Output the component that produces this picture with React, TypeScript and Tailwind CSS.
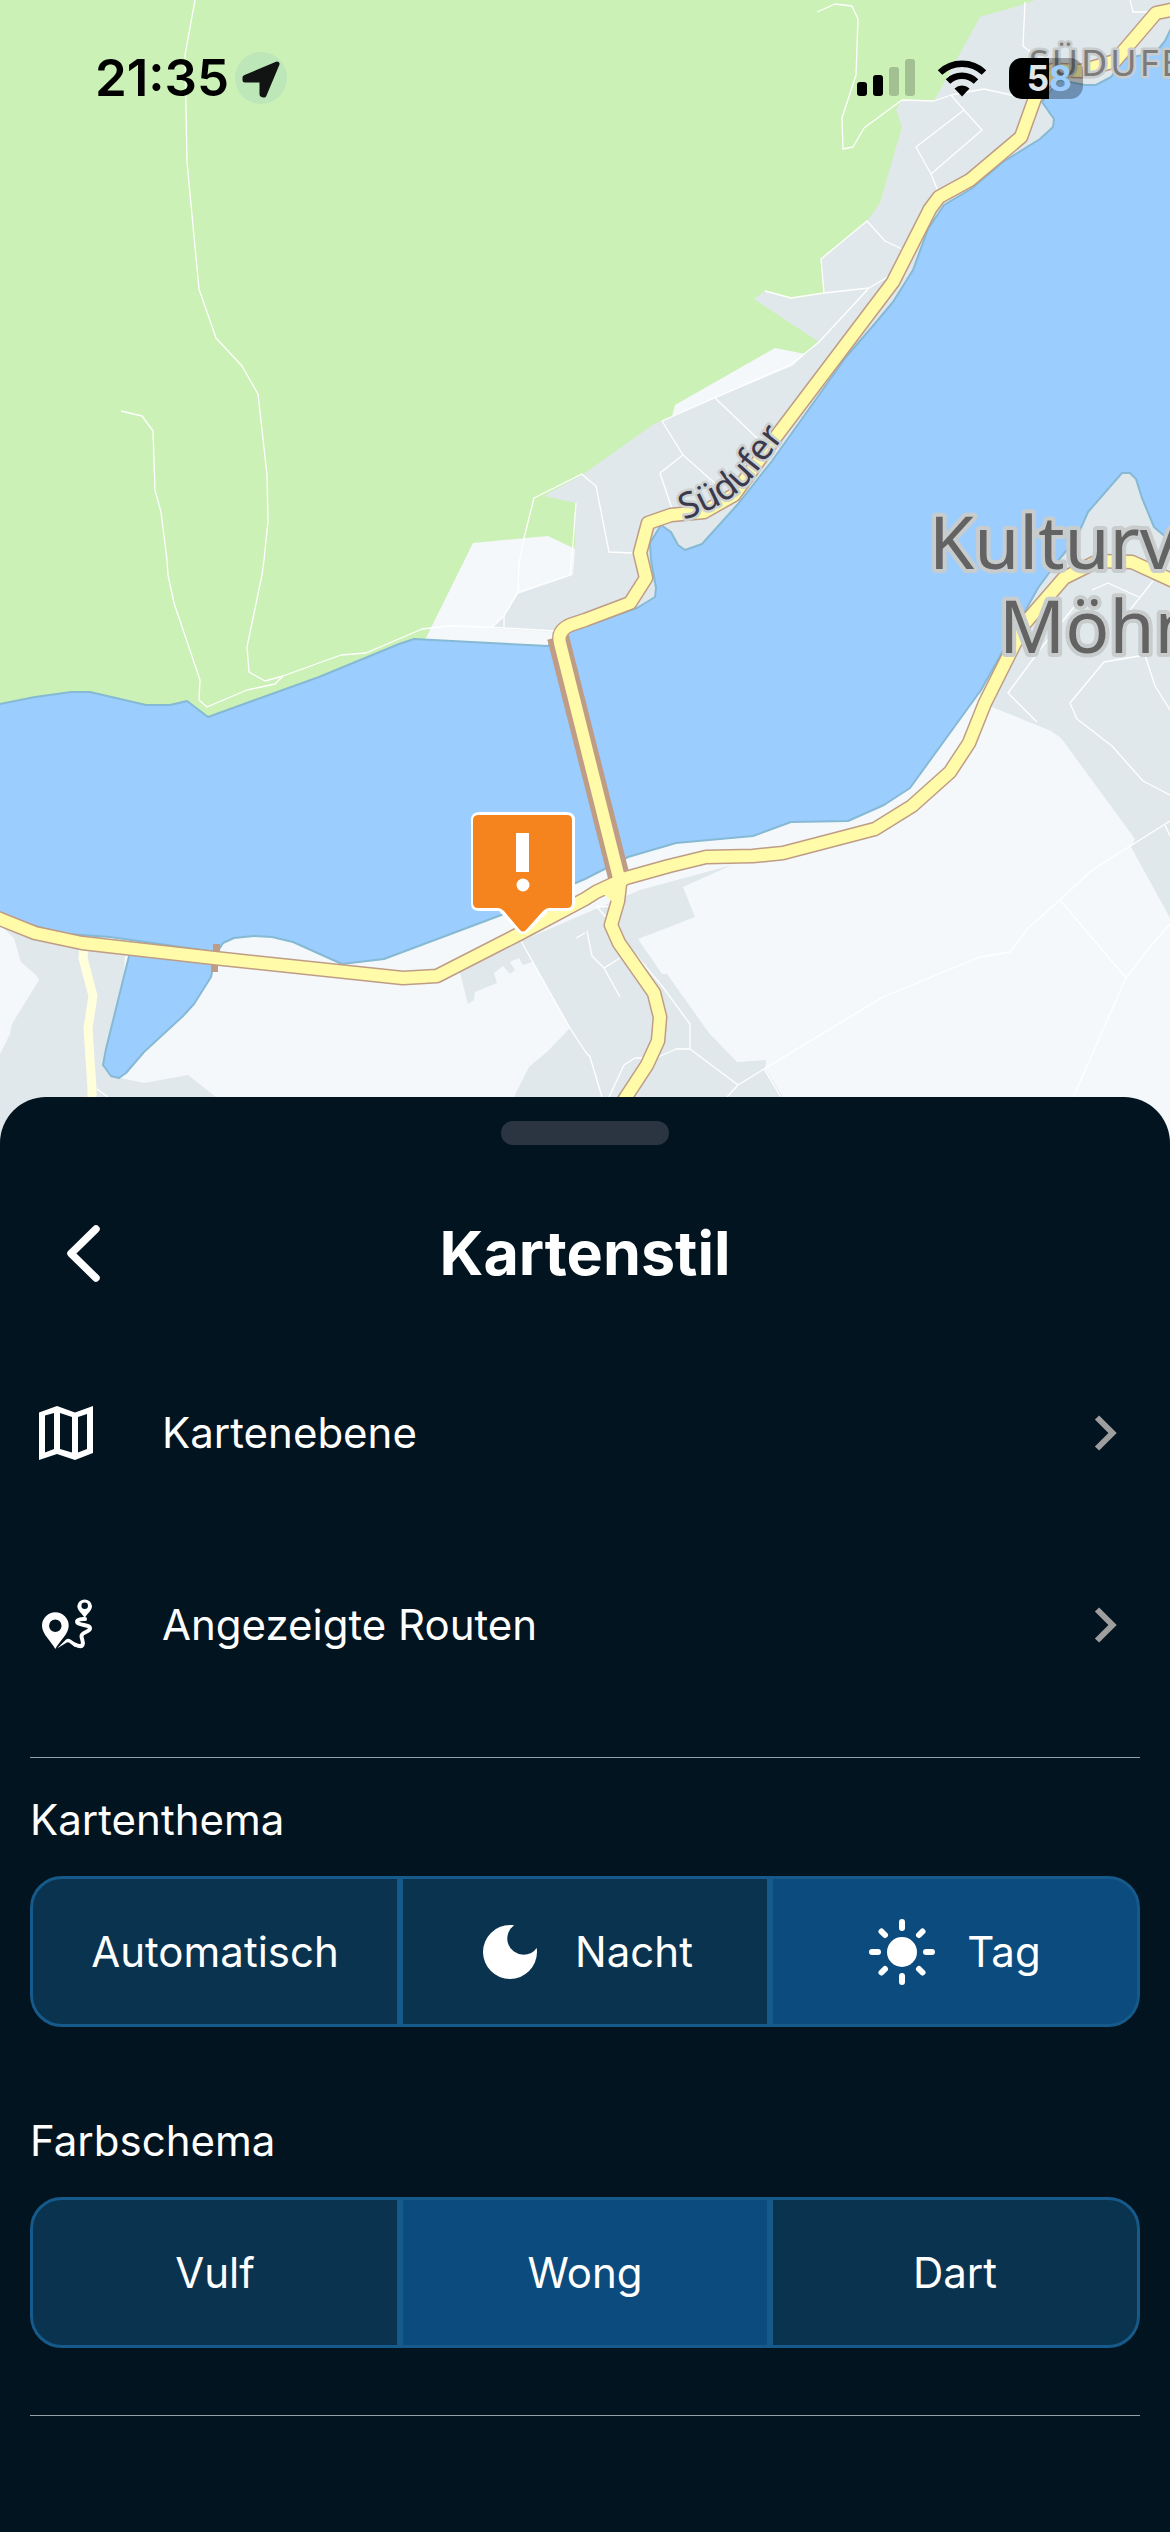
import { useState, type ReactNode } from "react";

const BUILT_UP = "#e0e8eb";
const OPEN_LAND = "#f4f8fb";
const FOREST = "#ccf1b7";
const WATER = "#9ccdff";
const SHORE = "#86b9d3";
const CASING = "#bf9c86";
const ROAD = "#fffba8";

const mainRoads = [
  "M-10 915 L0 919 L35 933 L82 943 L214 958 L403 978 L437 976 L521 933 L585 899 L596 892 L626 878 L669 866 L706 857 L753 856 L783 853 L875 829 L912 806 L950 772 L969 743 L985 703 L1025 623 L1064 578 L1098 561 L1132 562 L1180 584",
  "M621 886 L560 643 Q557 631 570 625 L585 620 L630 603 L646 578 L640 553 L648 523 L671 515 L704 512 L734 495 L775 438 L893 282 L930 209 L939 197 L970 180 L1021 137 L1035 98 L1053 70 L1081 71 L1115 61 L1156 13 L1180 8",
  "M620 884 L618 901 L611 925 L619 943 L654 993 L660 1017 L658 1041 L647 1065 L626 1097 L600 1140",
];

const paths = [
  "M195 0 L185 55 L187 162 L199 289 L216 338 L242 366 L258 394 L267 475 L268 521 L264 560 L262 575 L247 647 L249 672 L265 681 L283 676 L341 655 L366 653 L422 629 L448 626 L489 627 L554 631",
  "M121 411 L142 416 L153 431 L155 490 L161 512 L167 560 L168 575 L174 603 L200 680 L199 700 L207 707 L247 690 L275 684 L283 676",
  "M585 477 L582 474 L534 498 L524 538 L519 564 L518 592 L504 616 L491 628",
  "M518 592 L570 575 L573 544 L576 503",
  "M504 616 L504 629",
  "M585 477 L596 486 L609 552 L634 553",
  "M817 12 L835 4 L852 6 L858 19 L856 75 L842 118 L843 149 L853 147 L864 128 L902 100 L934 101 L951 95 L984 89 L1025 98",
  "M951 95 L964 110 L982 130 L931 174",
  "M964 110 L916 147 L931 174 L938 191",
  "M1025 2 L1023 46 L1033 54",
  "M1130 0 L1133 12 L1152 12",
  "M824 293 L821 259 L867 221 L885 241 L902 249",
  "M765 291 L791 298 L824 293 L869 288 L891 275",
  "M869 288 L819 342 L792 364 L662 421 L683 455 L660 473 L672 509",
  "M683 455 L718 486",
  "M714 397 L758 439",
  "M1153 581 L1130 610",
  "M1092 590 L1108 583 L1139 597",
  "M1074 607 L1042 647 L1008 693 L1037 722",
  "M1170 710 L1155 686 L1145 655 L1104 662 L1070 703 L1077 719 L1112 746 L1143 781 L1170 795",
  "M1145 655 L1151 641 L1144 635",
  "M1170 821 L1092 870 L1060 900 L1028 928 L1010 952 L980 957 L883 997 L764 1069 L738 1085 L727 1097",
  "M1060 900 L1126 978 L1150 947 L1170 924",
  "M1126 978 L1072 1100",
  "M764 1069 L781 1097",
  "M738 1085 L690 1049 L690 1024 L662 986 L624 941",
  "M690 1049 L676 1049 L656 1058 L635 1058 L624 1065 L609 1097",
  "M585 1051 L590 1057 L602 1097",
  "M611 906 L597 907 L606 917",
  "M587 931 L592 956 L604 968 L620 958",
  "M604 968 L620 997",
  "M521 941 L570 1028 L585 1051",
  "M576 938 L585 933",
  "M97 1089 L108 1097",
  "M1165 825 L1170 836",
];

function MapCanvas() {
  return (
    <svg
      className="block h-full w-full"
      viewBox="0 0 1170 1143"
      preserveAspectRatio="xMidYMin slice"
      role="img"
      aria-label="Karte"
    >
      <rect width="1170" height="1143" fill={BUILT_UP} />
      <path
        fill={FOREST}
        d="M0 0H1035L1025 4L980 17L934 101L902 100L896 110L902 127L880 203L867 221L821 259L824 294L791 299L765 291L754 299L819 342L805 355L672 416L654 424L585 473L582 475L544 496L576 503L575 548L548 540L473 545L425 650L208 730L0 715Z"
      />
      <g fill={OPEN_LAND}>
        <path d="M775 348L805 354L792 366L672 416L675 405Z" />
        <path d="M425 640L473 543L548 536L575 549L573 575L518 594L504 616L491 628L552 632L552 660H415Z" />
        <path d="M0 925L14 938L21 962L36 975L39 980L12 1024L10 1034L0 1054Z" />
        <path d="M992 707L975 690L560 800L200 925L90 930L125 950L121 1078L144 1083L188 1075L216 1097V1143H514V1097L529 1067L548 1051L570 1028L521 941L640 890L732 865L683 887L695 917L638 939L662 974L667 974L709 1033L737 1062L766 1060L765 1069L783 1097V1143H1170V918L1131 847L1135 839L1061 738L1051 731Z" />
      </g>
      <path
        fill={BUILT_UP}
        d="M437 976L460 973L468 1004L474 1000L475 992L497 983L494 973L503 966L510 974L515 970L510 962L519 958L523 965L532 962L521 936L470 958Z"
      />
      <g fill={WATER} stroke={SHORE} strokeWidth="2" strokeLinejoin="round">
        <path d="M-5 705L35 697L71 692H90L146 705H170L187 701L208 717L280 691L319 677L399 644L414 639L548 646L560 635L637 608L655 597L656 588L651 560L650 543L661 525L671 532L678 545L685 550L702 544L738 504L772 461L846 357L872 327L893 302L913 270L928 229L944 205L971 189L1003 162L1040 139L1053 127L1054 119L1042 102L1059 80L1085 85H1096L1111 77L1124 59L1156 52L1165 41L1175 20V545L1154 527L1142 498L1136 479L1130 473H1122L1088 512L1076 539L1057 562L1038 588L999 658L981 690L910 788L884 805L848 821L791 822L753 836L676 843L628 857L585 879L504 914L384 959L342 964L293 942L272 937L254 936L234 938L223 943L218 951L209 951L110 937L67 934L-5 916Z" />
        <path d="M130 952L214 962L211 977L194 1004L183 1016L144 1052L126 1073L119 1078L111 1076L103 1065L106 1049Z" />
      </g>
      <g fill="none" stroke="#ffffff" strokeWidth="1.3" strokeLinejoin="round">
        {paths.map((d) => (
          <path key={d} d={d} />
        ))}
      </g>
      <path d="M84 946L83 958L93 996L88 1028L92 1088V1143" fill="none" stroke="#ffffdc" strokeWidth="9" />
      <path d="M213 948h7M211 968h7" stroke={CASING} strokeWidth="8" />
      <g fill="none" strokeLinejoin="round">
        <g stroke={CASING} strokeWidth="15">
          {mainRoads.map((d) => (
            <path key={d} d={d} />
          ))}
        </g>
        <path d="M558 637L620 881" stroke={CASING} strokeWidth="22" />
        <g stroke={ROAD} strokeWidth="12">
          {mainRoads.map((d) => (
            <path key={d} d={d} />
          ))}
        </g>
      </g>
      <path d="M602 893L616 884L614 903Z" fill={ROAD} />
      <path id="shore-road" d="M684 520C715 509 735 499 753 477L803 413" fill="none" />
      <g fontFamily="'Noto Sans', sans-serif" paintOrder="stroke" strokeLinejoin="round">
        <text fontSize="36" fill="#3b3a4d" stroke="#cfd2d2" strokeWidth="5">
          <textPath href="#shore-road">Südufer</textPath>
        </text>
        <g fontSize="73" fill="#636363" stroke="#c9cccc" strokeWidth="8">
          <text x="929" y="569">Kulturv</text>
          <text x="999" y="653">Möhn</text>
        </g>
        <text x="1029" y="76" fontSize="36" letterSpacing="3" fill="#7c7c7c" stroke="#c9cccc" strokeWidth="5">
          SÜDUFER
        </text>
      </g>
      <g>
        <path
          d="M480 812H566Q575 812 575 820V903Q575 911 567 911H549L530 930Q523 938 516 930L499 911H479Q471 911 471 903V820Q471 812 480 812Z"
          fill="#ffffff"
        />
        <path
          d="M479 815H567Q572 815 572 820V903Q572 908 567 908H549Q546 908 543 911L526 930Q523 933 520 930L504 911Q501 908 498 908H478Q473 908 473 903V820Q473 815 479 815Z"
          fill="#f5841f"
        />
        <rect x="516" y="833" width="13" height="39" fill="#ffffff" />
        <circle cx="523" cy="885" r="6.5" fill="#ffffff" />
      </g>
    </svg>
  );
}

function StatusBar() {
  return (
    <div className="absolute inset-x-0 top-0 flex h-[156px] items-center justify-between pr-[87px] pl-[95px] text-black">
      <div className="flex items-center gap-1.5">
        <span className="text-[51px] leading-[60px] font-semibold">21:35</span>
        <svg className="size-[52px]" viewBox="0 0 52 52" aria-hidden="true">
          <circle cx="26" cy="26" r="26" fill="#bde6b9" />
          <path
            d="M42 12L10 25.500L10 28H27V42.500L29 43Z"
            fill="#111412"
            stroke="#111412"
            strokeWidth="5"
            strokeLinejoin="round"
          />
        </svg>
      </div>
      <div className="flex items-center gap-[22px]">
        <svg className="h-[38px] w-[58px]" viewBox="0 0 58 38" aria-hidden="true">
          <rect y="23" width="10" height="14" rx="3" />
          <rect x="16" y="16" width="10" height="21" rx="3" />
          <rect x="32" y="8" width="10" height="29" rx="3" opacity="0.2" />
          <rect x="48" width="10" height="37" rx="3" opacity="0.2" />
        </svg>
        <svg className="h-[38px] w-[50px]" viewBox="0 0 50 38" aria-hidden="true">
          <path d="M3 13.500A32 32 0 0 1 47 13.500" fill="none" stroke="#000" strokeWidth="6.500" />
          <path d="M11 22.500A20 20 0 0 1 39 22.500" fill="none" stroke="#000" strokeWidth="6.500" />
          <path d="M25 37.500L17.500 29.500A11 11 0 0 1 32.500 29.500Z" />
        </svg>
        <div className="flex h-[41px] w-[74px] overflow-hidden rounded-[13px] text-[35px] leading-[41px] font-bold">
          <span className="w-[40px] bg-black text-right text-[#e0e6e8]">5</span>
          <span className="grow bg-black/30 text-[#9ccdff]">8</span>
        </div>
      </div>
    </div>
  );
}

function MapIcon() {
  return (
    <svg className="size-[54px]" viewBox="0 0 54 54" aria-hidden="true">
      <path
        fill="currentColor"
        fillRule="evenodd"
        d="M0 6.500L18 0L36 6.500L54 0V47L36 54L18 48L0 54ZM6 9.500V46.500L15 43V7ZM21 7V43L33 46.500V11ZM39 11V46.500L48 43V8Z"
      />
    </svg>
  );
}

function RouteIcon() {
  return (
    <svg className="size-[70px]" viewBox="0 0 70 70" aria-hidden="true">
      <g fill="currentColor" fillRule="evenodd">
        <path d="M24.300 59C20 51 11 44 11 35.700A13.300 13.300 0 0 1 37.700 35.700C37.700 44 28.500 51 24.300 59ZM24.300 29.500A6.200 6.200 0 1 0 24.300 42A6.200 6.200 0 1 0 24.300 29.500Z" />
        <path d="M53.700 28C51.500 23.500 46.300 21 46.300 16A7.400 7.400 0 0 1 61 16C61 21 56 23.500 53.700 28ZM53.700 12.500A3.200 3.200 0 1 0 53.700 19A3.200 3.200 0 1 0 53.700 12.500Z" />
        <path d="M26 58.500L35 49.500Q37 48 39.500 49.500L46 54L44 57L38 52.500Q36.500 51.800 35 53Z" />
      </g>
      <path
        d="M54 29C47 28.500 44 31.500 47.500 33.500C52 35.500 59 35 59 38.500C59 42 50.500 42 50.500 46C50.500 50 53 51 51.500 55C50.500 57 47 56 44 54.500"
        fill="none"
        stroke="currentColor"
        strokeWidth="4"
        strokeLinecap="round"
      />
    </svg>
  );
}

function MoonIcon() {
  return (
    <svg className="size-[54px]" viewBox="3 3 18 18" aria-hidden="true">
      <path
        fill="currentColor"
        d="M12 3a9 9 0 1 0 9 9c0-.46-.04-.92-.1-1.36a5.389 5.389 0 0 1-4.400 2.260 5.403 5.403 0 0 1-3.140-9.800c-.44-.06-.9-.1-1.360-.1z"
      />
    </svg>
  );
}

function SunIcon() {
  return (
    <svg className="size-[66px]" viewBox="-33 -33 66 66" aria-hidden="true">
      <circle r="15" fill="currentColor" />
      <path
        d="M0-30V-24M0 24V30M-30 0H-24M24 0H30M-20.500-20.500L-17-17M20.500-20.500L17-17M-20.500 20.500L-17 17M20.500 20.500L17 17"
        stroke="currentColor"
        strokeWidth="6"
        strokeLinecap="round"
      />
    </svg>
  );
}

function MenuRow({ icon, label }: { icon: ReactNode; label: string }) {
  return (
    <button type="button" className="flex h-48 w-full items-center pr-[52px] pl-[30px] text-left">
      <span className="flex w-[72px] justify-center">{icon}</span>
      <span className="ml-[60px] grow text-[42px] leading-[48px]">{label}</span>
      <svg className="h-[36px] w-[24px] text-[#9e9e9e]" viewBox="0 0 24 36" aria-hidden="true">
        <path d="M3 2.500L18.500 18L3 33.500" fill="none" stroke="currentColor" strokeWidth="6" />
      </svg>
    </button>
  );
}

type Option = { label: string; icon?: ReactNode };

function SegmentedChoice({ title, name, options, initial }: { title: string; name: string; options: Option[]; initial: string }) {
  const [value, setValue] = useState(initial);
  return (
    <fieldset>
      <legend className="text-[42px] leading-[48px]">{title}</legend>
      <div className="mt-8 grid h-[151px] grid-cols-3 text-[42px] leading-[48px]">
        {options.map((option) => (
          <label
            key={option.label}
            className="relative flex cursor-pointer items-center justify-center gap-8 border-[3px] border-[#155a8a] bg-[#0a334f] first:rounded-l-[32px] last:rounded-r-[32px] has-checked:bg-[#0b4b7e]"
          >
            <input
              type="radio"
              name={name}
              className="sr-only"
              checked={value === option.label}
              onChange={() => setValue(option.label)}
            />
            {option.icon && <span className="flex w-[66px] justify-center">{option.icon}</span>}
            {option.label}
          </label>
        ))}
      </div>
    </fieldset>
  );
}

export default function App() {
  return (
    <div className="flex min-h-screen flex-col overflow-hidden bg-[#02141f] font-[Inter,sans-serif] text-white">
      <div className="relative h-[1143px] shrink-0">
        <MapCanvas />
        <StatusBar />
      </div>
      <main className="relative -mt-[46px] grow rounded-t-[46px] bg-[#02141f] pt-6 pb-16">
        <div className="mx-auto h-6 w-[168px] rounded-full bg-[#2b3541]" />
        <header className="mt-12 grid h-[120px] grid-cols-[160px_1fr_160px] items-center">
          <button type="button" aria-label="Zurück" className="pl-[67px]">
            <svg className="h-[57px] w-[33px]" viewBox="0 0 33 57" aria-hidden="true">
              <path
                d="M29 4L4 28.500L29 53"
                fill="none"
                stroke="currentColor"
                strokeWidth="7.500"
                strokeLinecap="round"
                strokeLinejoin="round"
              />
            </svg>
          </button>
          <h1 className="text-center text-[61px] leading-[72px] font-bold">Kartenstil</h1>
        </header>
        <nav className="mt-6">
          <MenuRow icon={<MapIcon />} label="Kartenebene" />
          <MenuRow icon={<RouteIcon />} label="Angezeigte Routen" />
        </nav>
        <div className="px-[30px] pt-9">
          <hr className="mb-[38px] border-[#94a1a9]" />
          <SegmentedChoice
            title="Kartenthema"
            name="theme"
            initial="Tag"
            options={[{ label: "Automatisch" }, { label: "Nacht", icon: <MoonIcon /> }, { label: "Tag", icon: <SunIcon /> }]}
          />
          <div className="mt-[90px]">
            <SegmentedChoice
              title="Farbschema"
              name="scheme"
              initial="Wong"
              options={[{ label: "Vulf" }, { label: "Wong" }, { label: "Dart" }]}
            />
          </div>
          <hr className="mt-[67px] border-[#94a1a9]" />
        </div>
      </main>
    </div>
  );
}
